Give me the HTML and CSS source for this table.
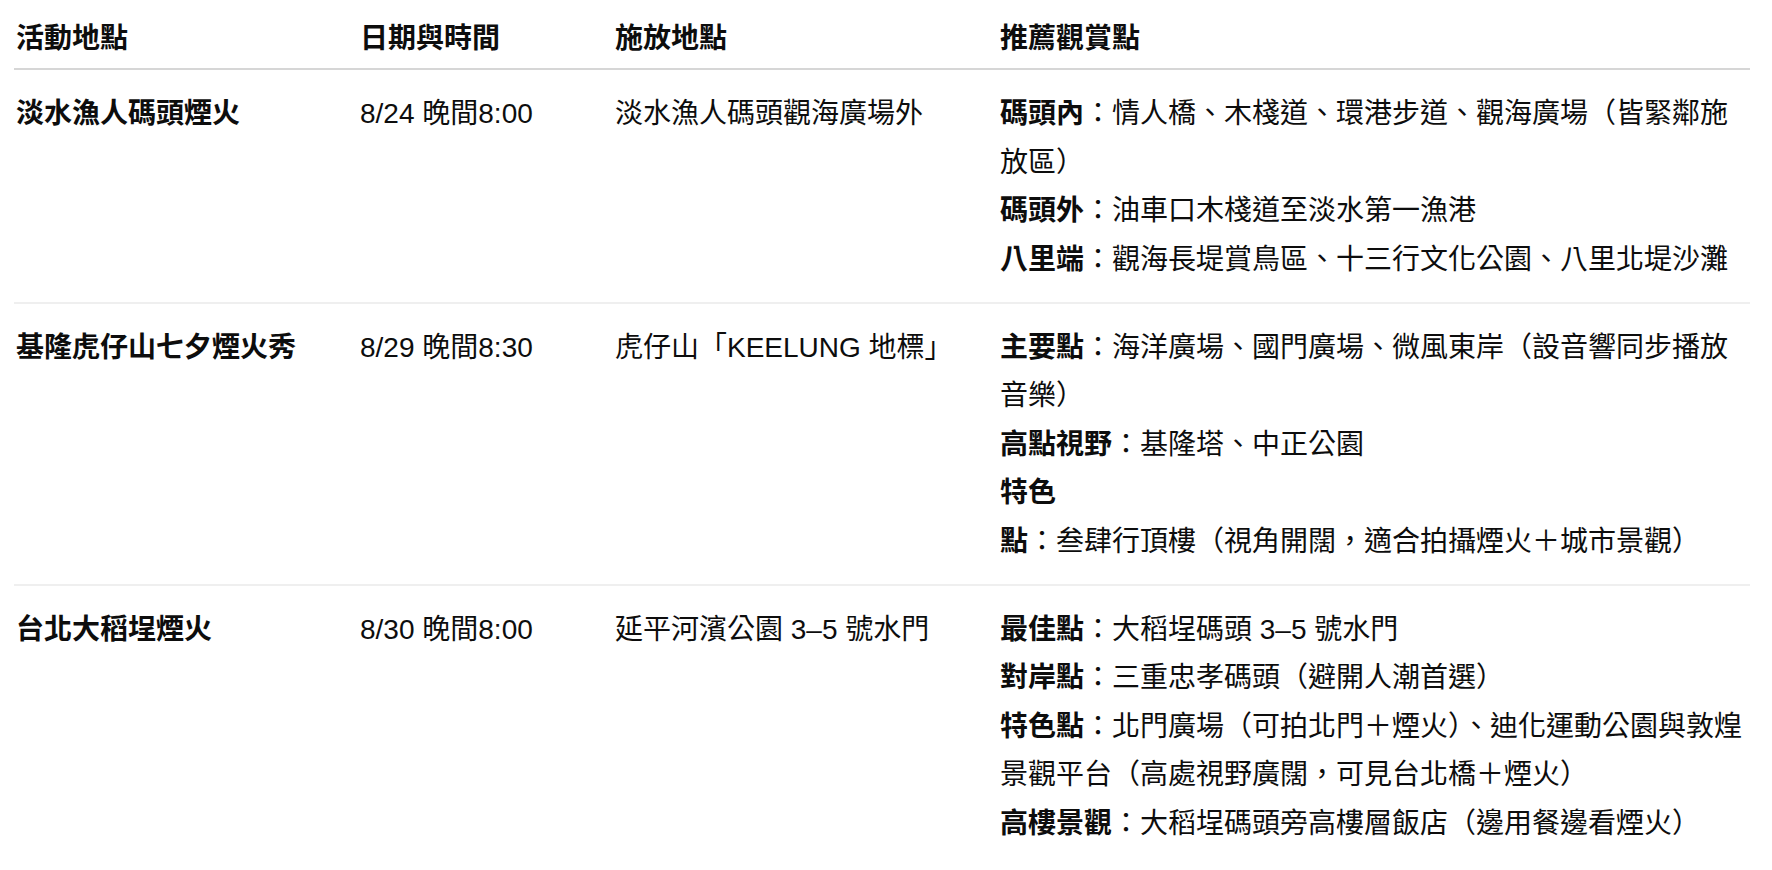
FILE: index.html
```html
<!DOCTYPE html>
<html lang="zh-Hant">
<head>
<meta charset="utf-8">
<title>煙火觀賞點</title>
<link rel="stylesheet" href="styles.css">
</head>
<body>
<table class="events">
  <colgroup>
    <col class="c1">
    <col class="c2">
    <col class="c3">
    <col class="c4">
  </colgroup>
  <thead>
    <tr>
      <th>活動地點</th>
      <th>日期與時間</th>
      <th>施放地點</th>
      <th>推薦觀賞點</th>
    </tr>
  </thead>
  <tbody>
    <tr>
      <td><b>淡水漁人碼頭煙火</b></td>
      <td>8/24 晚間8:00</td>
      <td>淡水漁人碼頭觀海廣場外</td>
      <td>
        <div class="spot"><b>碼頭內</b>：情人橋、木棧道、環港步道、觀海廣場（皆緊鄰施放區）</div>
        <div class="spot"><b>碼頭外</b>：油車口木棧道至淡水第一漁港</div>
        <div class="spot"><b>八里端</b>：觀海長堤賞鳥區、十三行文化公園、八里北堤沙灘</div>
      </td>
    </tr>
    <tr>
      <td><b>基隆虎仔山七夕煙火秀</b></td>
      <td>8/29 晚間8:30</td>
      <td>虎仔山「KEELUNG 地標」</td>
      <td>
        <div class="spot"><b>主要點</b>：海洋廣場、國門廣場、微風東岸（設音響同步播放音樂）</div>
        <div class="spot"><b>高點視野</b>：基隆塔、中正公園</div>
        <div class="spot"><b>特色<br>點</b>：叁肆行頂樓（視角開闊，適合拍攝煙火＋城市景觀）</div>
      </td>
    </tr>
    <tr>
      <td><b>台北大稻埕煙火</b></td>
      <td>8/30 晚間8:00</td>
      <td>延平河濱公園 3–5 號水門</td>
      <td>
        <div class="spot"><b>最佳點</b>：大稻埕碼頭 3–5 號水門</div>
        <div class="spot"><b>對岸點</b>：三重忠孝碼頭（避開人潮首選）</div>
        <div class="spot"><b>特色點</b>：北門廣場（可拍北門＋煙火）、迪化運動公園與敦煌景觀平台（高處視野廣闊，可見台北橋＋煙火）</div>
        <div class="spot"><b>高樓景觀</b>：大稻埕碼頭旁高樓層飯店（邊用餐邊看煙火）</div>
      </td>
    </tr>
  </tbody>
</table>
</body>
</html>
```

FILE: styles.css
```css
html, body {
  margin: 0;
  padding: 0;
  background: #ffffff;
}

body {
  font-family: "Liberation Sans", "Noto Sans CJK TC", sans-serif;
  font-size: 28px;
  line-height: 48.4px;
  color: #0d0d0d;
}

.events {
  margin-left: 14px;
  width: 1736px;
  border-collapse: collapse;
  table-layout: fixed;
}

.c1 { width: 344px; }
.c2 { width: 255px; }
.c3 { width: 385px; }
.c4 { width: 752px; }

.events th {
  text-align: left;
  font-weight: 700;
  padding: 15px 0 5px 2px;
  border-bottom: 2px solid #d6d6d6;
  vertical-align: top;
}

.events td {
  padding: 20px 0 18px 2px;
  vertical-align: top;
  border-bottom: 2px solid #efefef;
}

.events tbody tr:last-child td {
  border-bottom: none;
}

.events b {
  font-weight: 700;
}

.spot {
  margin: 0;
}
```
